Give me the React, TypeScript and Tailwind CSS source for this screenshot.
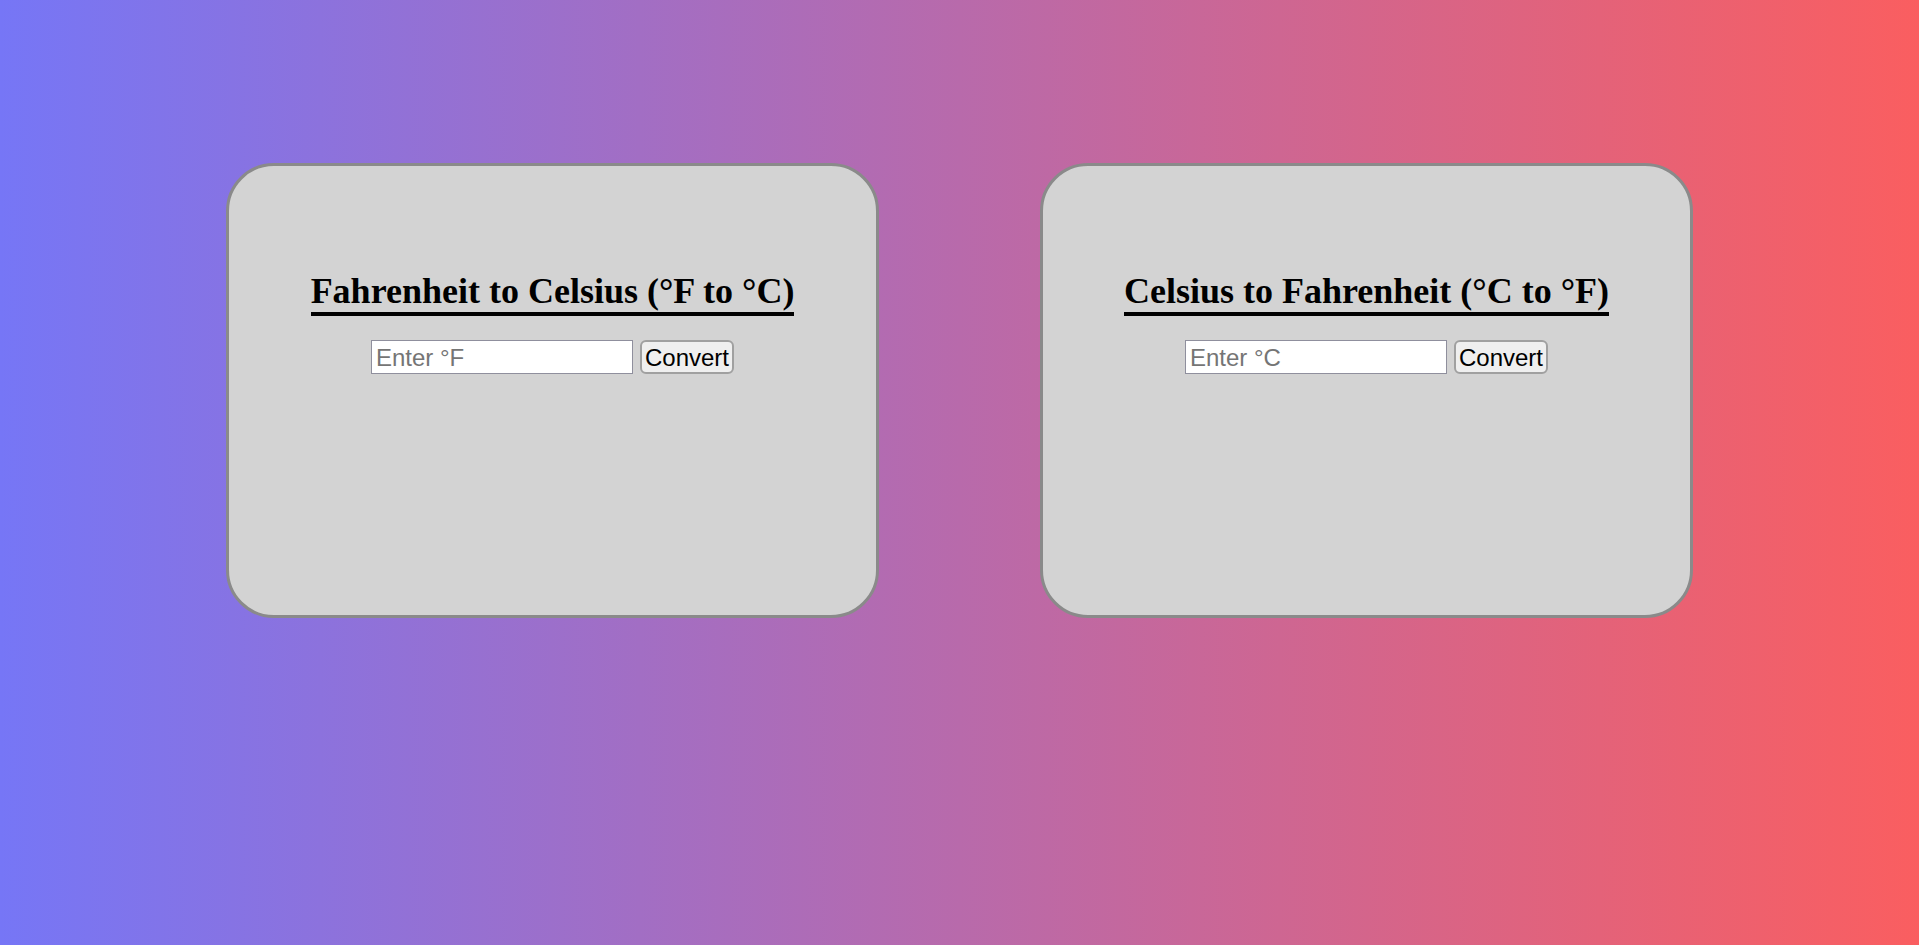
export default function App() {
  return (
    <div className="min-h-screen w-full bg-[linear-gradient(to_right,#7676f6,#fa5e60)] pt-[163px]">
      <div className="flex justify-center gap-[161px]">
        <ConverterCard title="Fahrenheit to Celsius (°F to °C)" placeholder="Enter °F" />
        <ConverterCard title="Celsius to Fahrenheit (°C to °F)" placeholder="Enter °C" />
      </div>
    </div>
  );
}

function ConverterCard({ title, placeholder }: { title: string; placeholder: string }) {
  return (
    <div className="w-[653px] h-[455px] bg-[#d3d3d3] border-[3px] border-[#8a8a8a] rounded-[48px] flex flex-col items-center pt-[105px]">
      <h2 className="inline-block border-b-4 border-black text-[36px] leading-[41px] font-bold text-black font-['Liberation_Serif',serif]">
        {title}
      </h2>
      <div className="mt-[24px] flex items-center gap-[7px] font-['Liberation_Sans',sans-serif]">
        <input
          type="text"
          placeholder={placeholder}
          className="w-[262px] h-[34px] bg-white border border-[#8f8f9d] px-[4px] pt-[2px] text-[24px] text-black placeholder:text-[#757575] outline-none"
        />
        <button className="h-[34px] px-[3px] pt-[2px] bg-[#efefef] border-2 border-[#a0a0a0] rounded-[6px] text-[24px] leading-none text-black">
          Convert
        </button>
      </div>
    </div>
  );
}
